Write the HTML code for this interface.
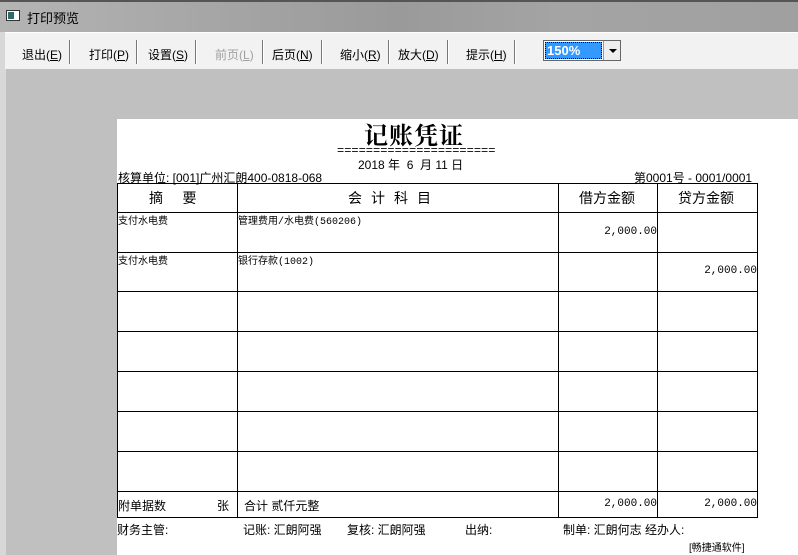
<!DOCTYPE html>
<html><head><meta charset="utf-8"><style>
*{margin:0;padding:0;box-sizing:border-box}
body{width:798px;height:555px;overflow:hidden;background:#c0c0c0;font-family:"Liberation Sans","Noto Sans CJK SC",sans-serif;position:relative}
.abs{position:absolute;white-space:nowrap}
.title{left:0;top:0;width:798px;height:32px;background:linear-gradient(90deg,#b4b4b4,#a9a9a9 20%,#9a9a9a 50%,#a4a4a4 70%,#a0a0a0);border-top:2px solid #555}
.tb{left:5px;top:32px;width:793px;height:37px;background:#f2f2f2;border-top:1px solid #fff}
.btn{font-size:12px;color:#000;top:46px}
.sep{top:40px;width:2px;height:24px;background:#777;border-right:1px solid #fff}
.left{left:0;top:32px;width:6px;height:523px;background:#d8d8d8}
.paper{left:117px;top:119px;width:681px;height:436px;background:#fff}
.ln{position:absolute;background:#000}
.t{position:absolute;white-space:nowrap;font-family:"Liberation Sans","Noto Sans CJK SC",sans-serif;color:#000}
.s{font-size:10px;font-family:"Liberation Mono","Noto Sans CJK SC",monospace}
.r{text-align:right;width:100px}
</style></head><body>
<div class="abs title"></div>
<div class="abs" style="left:6px;top:10px;width:14px;height:11px;background:#fff;border:1px solid #333"><div style="position:absolute;left:1px;top:1px;width:6px;height:7px;background:#2d6b6b"></div></div>
<div class="abs" style="left:27px;top:8px;font-size:13px;color:#000">打印预览</div>
<div class="abs left"></div>
<div class="abs tb"></div>
<div class="abs btn" style="left:22px">退出(<u>E</u>)</div>
<div class="abs sep" style="left:69px"></div>
<div class="abs btn" style="left:89px">打印(<u>P</u>)</div>
<div class="abs sep" style="left:136px"></div>
<div class="abs btn" style="left:148px">设置(<u>S</u>)</div>
<div class="abs sep" style="left:195px"></div>
<div class="abs btn" style="left:215px;color:#a0a0a0">前页(<u>L</u>)</div>
<div class="abs sep" style="left:262px"></div>
<div class="abs btn" style="left:272px">后页(<u>N</u>)</div>
<div class="abs sep" style="left:321px"></div>
<div class="abs btn" style="left:340px">缩小(<u>R</u>)</div>
<div class="abs sep" style="left:388px"></div>
<div class="abs btn" style="left:398px">放大(<u>D</u>)</div>
<div class="abs sep" style="left:447px"></div>
<div class="abs btn" style="left:466px">提示(<u>H</u>)</div>
<div class="abs sep" style="left:514px"></div>
<div class="abs" style="left:543px;top:40px;width:78px;height:21px;background:#fff;border:1px solid #666"></div>
<div class="abs" style="left:545px;top:42px;width:57px;height:17px;background:#3399ff;border:1px dotted #000;color:#fff;font-size:13px;font-weight:bold;line-height:15px;padding-left:1px">150%</div>
<div class="abs" style="left:603px;top:41px;width:17px;height:19px;background:#eee;border-left:1px solid #999"><div style="position:absolute;left:5px;top:8px;border-left:4px solid transparent;border-right:4px solid transparent;border-top:4px solid #000"></div></div>
<div class="abs paper"></div>
<div class="t" style="left:364px;top:116px;font-size:24px;font-weight:bold;letter-spacing:1px;font-family:'Liberation Serif','Noto Serif CJK SC',serif">记账凭证</div>
<div class="t" style="left:337px;top:145px;font-size:12px;font-family:'Liberation Mono',monospace;line-height:12px">======================</div>
<div class="t" style="left:358px;top:156px;font-size:12px">2018 年 &nbsp;6 &nbsp;月 11 日</div>
<div class="t" style="left:118px;top:169px;font-size:12px">核算单位: [001]广州汇朗400-0818-068</div>
<div class="t" style="left:634px;top:169px;font-size:12px">第0001号 - 0001/0001</div>
<div class="ln" style="left:117px;top:183px;width:641px;height:1px"></div>
<div class="ln" style="left:117px;top:212px;width:641px;height:1px"></div>
<div class="ln" style="left:117px;top:252px;width:641px;height:1px"></div>
<div class="ln" style="left:117px;top:291px;width:641px;height:1px"></div>
<div class="ln" style="left:117px;top:331px;width:641px;height:1px"></div>
<div class="ln" style="left:117px;top:371px;width:641px;height:1px"></div>
<div class="ln" style="left:117px;top:411px;width:641px;height:1px"></div>
<div class="ln" style="left:117px;top:451px;width:641px;height:1px"></div>
<div class="ln" style="left:117px;top:491px;width:641px;height:1px"></div>
<div class="ln" style="left:117px;top:517px;width:641px;height:1px"></div>
<div class="ln" style="left:117px;top:183px;width:1px;height:335px"></div>
<div class="ln" style="left:237px;top:183px;width:1px;height:335px"></div>
<div class="ln" style="left:558px;top:183px;width:1px;height:335px"></div>
<div class="ln" style="left:657px;top:183px;width:1px;height:335px"></div>
<div class="ln" style="left:757px;top:183px;width:1px;height:335px"></div>
<div class="t" style="left:149px;top:188px;font-size:14px">摘&nbsp;&nbsp;&nbsp;&nbsp;&nbsp;要</div>
<div class="t" style="left:348px;top:188px;font-size:14px;letter-spacing:9px">会计科目</div>
<div class="t" style="left:579px;top:188px;font-size:14px">借方金额</div>
<div class="t" style="left:678px;top:188px;font-size:14px">贷方金额</div>
<div class="t" style="left:118px;top:212px;font-size:10px">支付水电费</div>
<div class="t s" style="left:238px;top:212px">管理费用/水电费(560206)</div>
<div class="t s r" style="left:557px;top:226px;font-size:11px">2,000.00</div>
<div class="t" style="left:118px;top:252px;font-size:10px">支付水电费</div>
<div class="t s" style="left:238px;top:252px">银行存款(1002)</div>
<div class="t s r" style="left:657px;top:265px;font-size:11px">2,000.00</div>
<div class="t" style="left:118px;top:497px;font-size:12px">附单据数</div>
<div class="t" style="left:217px;top:497px;font-size:12px">张</div>
<div class="t" style="left:244px;top:497px;font-size:12px">合计 贰仟元整</div>
<div class="t s r" style="left:557px;top:498px;font-size:11px">2,000.00</div>
<div class="t s r" style="left:657px;top:498px;font-size:11px">2,000.00</div>
<div class="t" style="left:117px;top:521px;font-size:12px">财务主管:</div>
<div class="t" style="left:243px;top:521px;font-size:12px">记账: 汇朗阿强</div>
<div class="t" style="left:347px;top:521px;font-size:12px">复核: 汇朗阿强</div>
<div class="t" style="left:465px;top:521px;font-size:12px">出纳:</div>
<div class="t" style="left:563px;top:521px;font-size:12px">制单: 汇朗何志 经办人:</div>
<div class="t" style="left:689px;top:539px;font-size:10px">[畅捷通软件]</div>
</body></html>
